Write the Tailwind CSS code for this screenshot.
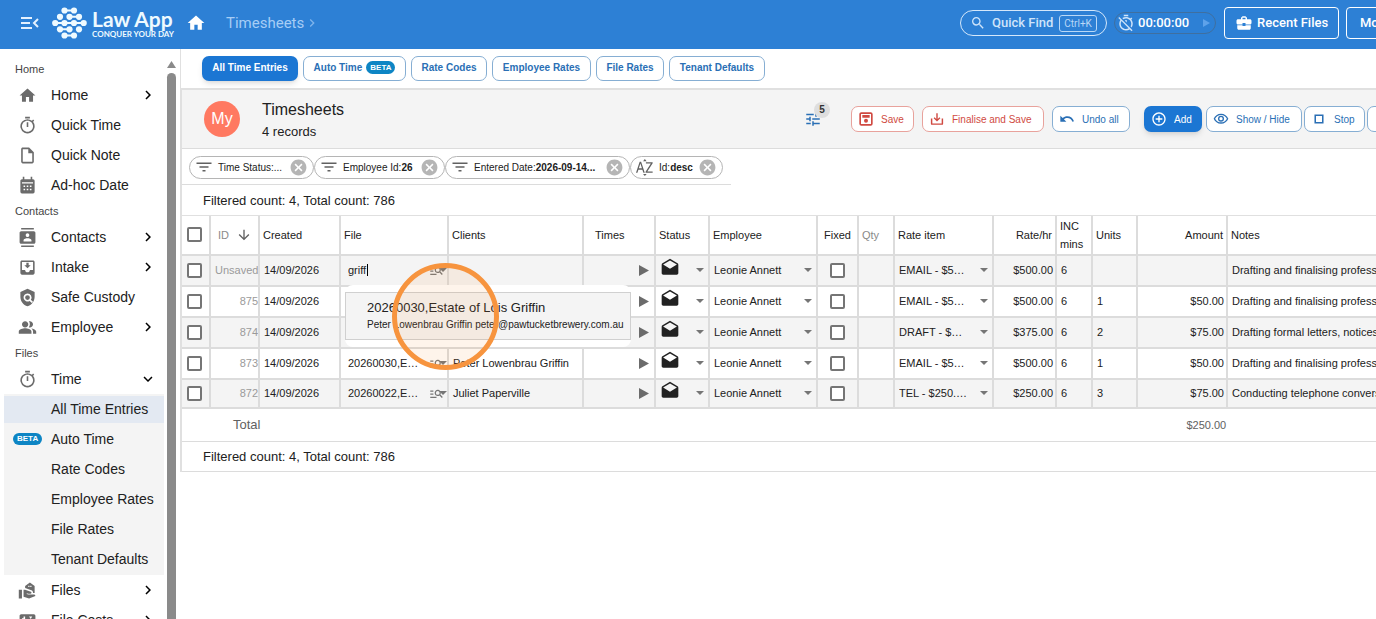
<!DOCTYPE html>
<html lang="en">
<head>
  <meta charset="UTF-8">
  <meta name="viewport" content="width=device-width, initial-scale=1.0">
  <title>Timesheets | Law App</title>
  <script src="https://cdn.jsdelivr.net/npm/@tailwindcss/browser@4"></script>
</head>
<body class="h-screen overflow-hidden flex flex-col bg-white text-[#212121] font-['Liberation_Sans',Arial,sans-serif]">

  <!-- icon sprite -->
  <svg class="hidden">
    <symbol id="i-home" viewBox="0 0 24 24"><path d="M10 20v-6h4v6h5v-8h3L12 3 2 12h3v8z"/></symbol>
    <symbol id="i-timer" viewBox="0 0 24 24"><path d="M15 1H9v2h6V1zm-4 13h2V8h-2v6zm8.03-6.61 1.42-1.42c-.43-.51-.9-.99-1.41-1.41l-1.42 1.42A8.96 8.96 0 0 0 12 4a9 9 0 1 0 7.03 3.39zM12 20c-3.87 0-7-3.13-7-7s3.13-7 7-7 7 3.13 7 7-3.13 7-7 7z"/></symbol>
    <symbol id="i-timer-off" viewBox="0 0 24 24"><path d="M19.04 4.55l-1.42 1.42C16.07 4.74 14.12 4 12 4c-1.83 0-3.53.55-4.95 1.48l1.46 1.46C9.53 6.35 10.73 6 12 6c3.87 0 7 3.13 7 7 0 1.27-.35 2.47-.94 3.49l1.45 1.45C20.45 16.53 21 14.83 21 13c0-2.12-.74-4.07-1.97-5.61l1.42-1.42-1.41-1.42zM15 1H9v2h6V1zm-4 8.44 2 2V8h-2v1.44zM3.02 4 1.75 5.27 4.5 8.03C3.55 9.45 3 11.16 3 13c0 4.97 4.02 9 9 9 1.84 0 3.55-.55 4.98-1.5l2.5 2.5 1.27-1.27L3.02 4zM12 20c-3.87 0-7-3.13-7-7 0-1.28.35-2.48.95-3.52l9.56 9.56c-1.03.61-2.23.96-3.51.96z"/></symbol>
    <symbol id="i-note" viewBox="0 0 24 24"><path d="M14 2H6c-1.1 0-2 .9-2 2v16c0 1.1.9 2 2 2h12c1.1 0 2-.9 2-2V8l-6-6zM6 20V4h7v5h5v11H6z"/></symbol>
    <symbol id="i-calendar" viewBox="0 0 24 24"><path fill-rule="evenodd" d="M5 4h1V1h2v3h8V1h2v3h1a2 2 0 0 1 2 2v14a2 2 0 0 1-2 2H5a2 2 0 0 1-2-2V6c0-1.100.9-2 2-2zM5 8v1.500h14V8zm2 4v2h2v-2zm4 0v2h2v-2zm4 0v2h2v-2zm-8 4v2h2v-2zm4 0v2h2v-2zm4 0v2h2v-2z"/></symbol>
    <symbol id="i-contacts" viewBox="0 0 24 24"><path d="M20 0H4v2h16V0zM4 24h16v-2H4v2zM20 4H4c-1.100 0-2 .9-2 2v12c0 1.100.9 2 2 2h16c1.100 0 2-.9 2-2V6c0-1.100-.9-2-2-2zm-8 2.750c1.240 0 2.250 1.010 2.250 2.250s-1.010 2.250-2.250 2.250S9.750 10.240 9.750 9 10.760 6.750 12 6.750zM17 17H7v-1.500c0-1.670 3.330-2.500 5-2.500s5 .83 5 2.500V17z"/></symbol>
    <symbol id="i-intake" viewBox="0 0 24 24"><path d="M16 9h-2.550V6h-2.900v3H8l4 4 4-4zm3-6H5c-1.100 0-2 .9-2 2v14c0 1.100.9 2 2 2h14c1.100 0 2-.9 2-2V5c0-1.100-.9-2-2-2zm0 12h-4c0 1.660-1.350 3-3 3s-3-1.340-3-3H5V5h14v10z"/></symbol>
    <symbol id="i-shield" viewBox="0 0 24 24"><path fill-rule="evenodd" d="M12 1l9 4v6c0 5.500-3.800 10.700-9 12-5.200-1.300-9-6.500-9-12V5zm0 6a5 5 0 1 0 2.600 9.270L17.500 19.100l1.400-1.700-2.700-2.600A5 5 0 0 0 12 7zm0 2a3 3 0 1 1 0 6 3 3 0 0 1 0-6z"/></symbol>
    <symbol id="i-people" viewBox="0 0 24 24"><path d="M16.670 13.130C18.040 14.060 19 15.320 19 17v3h4v-3c0-2.180-3.570-3.470-6.330-3.870zM15 12c2.210 0 4-1.790 4-4s-1.790-4-4-4c-.47 0-.91.1-1.330.24C14.500 5.270 15 6.580 15 8s-.5 2.730-1.330 3.760c.42.14.86.24 1.330.24zM9 12c2.210 0 4-1.790 4-4s-1.790-4-4-4-4 1.790-4 4 1.790 4 4 4zm0 1c-2.670 0-8 1.340-8 4v3h16v-3c0-2.660-5.330-4-8-4z"/></symbol>
    <symbol id="i-files" viewBox="0 0 24 24"><path d="M1 11h4v11H1zM20 17h-7l-2.090-.73.330-.940L13 16h2.820c.65 0 1.180-.53 1.180-1.180 0-.49-.31-.93-.77-1.110L8.970 11H7v9.020L14 22l8-3c-.01-1.100-.9-2-2-2zM21 15.300V6.200L15 2 9 6.200v2.600l7.930 2.950c1.240.46 2.070 1.660 2.070 2.980 0 .2 0 .4-.1.570zM13 6h1.500v1.500H13zm2.500 0H17v1.500h-1.500z"/></symbol>
    <symbol id="i-costs" viewBox="0 0 24 24"><path fill-rule="evenodd" d="M4 4h16a2 2 0 0 1 2 2v12a2 2 0 0 1-2 2H4a2 2 0 0 1-2-2V6c0-1.100.9-2 2-2zm3 3v2H5v2h4V7zm7 0l2 3 2-3z"/></symbol>
    <symbol id="i-right" viewBox="0 0 24 24"><path d="M8.600 16.600 13.200 12 8.600 7.400 10 6l6 6-6 6z"/></symbol>
    <symbol id="i-down" viewBox="0 0 24 24"><path d="M16.600 8.600 12 13.200 7.400 8.600 6 10l6 6 6-6z"/></symbol>
    <symbol id="i-search" viewBox="0 0 24 24"><path d="M15.500 14h-.79l-.28-.27A6.470 6.470 0 0 0 16 9.500 6.500 6.500 0 1 0 9.500 16c1.610 0 3.090-.59 4.230-1.570l.27.28v.79l5 4.990L20.490 19l-4.990-5zm-6 0C7.010 14 5 11.990 5 9.500S7.010 5 9.500 5 14 7.010 14 9.500 11.990 14 9.500 14z"/></symbol>
    <symbol id="i-case" viewBox="0 0 24 24"><path d="M10 16v-1H3v4c0 1.110.89 2 2 2h14c1.110 0 2-.89 2-2v-4h-7v1h-4zm10-9h-4V5l-2-2h-4L8 5v2H4c-1.100 0-2 .9-2 2v3c0 1.110.89 2 2 2h6v-2h4v2h6c1.100 0 2-.9 2-2V9c0-1.100-.9-2-2-2zm-6 0h-4V5h4v2z"/></symbol>
    <symbol id="i-tune" viewBox="0 0 24 24"><path d="M3 17v2h6v-2H3zM3 5v2h10V5H3zm10 16v-2h8v-2h-8v-2h-2v6h2zM7 9v2H3v2h4v2h2V9H7zm14 4v-2H11v2h10zm-6-4h2V7h4V5h-4V3h-2v6z"/></symbol>
    <symbol id="i-save" viewBox="0 0 24 24"><path fill-rule="evenodd" d="M5 2h14a3 3 0 0 1 3 3v14a3 3 0 0 1-3 3H5a3 3 0 0 1-3-3V5c0-1.700 1.300-3 3-3zm-.5 2.500v15h15v-15zm2 1.500h11v4h-11zM12 11.500a3 3 0 1 1 0 6 3 3 0 0 1 0-6z"/></symbol>
    <symbol id="i-import" viewBox="0 0 24 24"><path d="M10.800 2h2.400v10l3-3 1.600 1.600L12 16.400l-5.800-5.800L7.800 9l3 3zM1.500 11H4v8.500h16V11h2.500v9a2 2 0 0 1-2 2h-17a2 2 0 0 1-2-2z"/></symbol>
    <symbol id="i-undo" viewBox="0 0 24 24"><path d="M12.500 8c-2.650 0-5.050.99-6.900 2.600L2 7v9h9l-3.620-3.620c1.390-1.160 3.160-1.880 5.120-1.880 3.540 0 6.550 2.310 7.600 5.500l2.370-.78C21.080 11.030 17.150 8 12.500 8z"/></symbol>
    <symbol id="i-add" viewBox="0 0 24 24"><path d="M13 7h-2v4H7v2h4v4h2v-4h4v-2h-4V7zm-1-5C6.480 2 2 6.480 2 12s4.480 10 10 10 10-4.480 10-10S17.520 2 12 2zm0 18c-4.410 0-8-3.590-8-8s3.590-8 8-8 8 3.590 8 8-3.590 8-8 8z"/></symbol>
    <symbol id="i-eye" viewBox="0 0 24 24"><path d="M12 6c3.790 0 7.170 2.130 8.820 5.500C19.170 14.870 15.790 17 12 17s-7.170-2.130-8.820-5.500C4.830 8.130 8.210 6 12 6m0-2C7 4 2.730 7.110 1 11.500 2.730 15.890 7 19 12 19s9.270-3.110 11-7.500C21.270 7.110 17 4 12 4zm0 5a2.500 2.500 0 1 1 0 5 2.500 2.500 0 0 1 0-5m0-2a4.500 4.500 0 1 0 0 9 4.500 4.500 0 0 0 0-9z"/></symbol>
    <symbol id="i-stop" viewBox="0 0 24 24"><path d="M16.500 7.500v9h-9v-9h9m2.300-2.300H5.200v13.600h13.600z"/></symbol>
    <symbol id="i-filter" viewBox="0 0 24 24"><path d="M10 18h4v-2h-4v2zM2 6v2h20V6H2zm4 7h12v-2H6v2z"/></symbol>
    <symbol id="i-close" viewBox="0 0 24 24"><path d="M12 2C6.470 2 2 6.470 2 12s4.470 10 10 10 10-4.470 10-10S17.530 2 12 2zm5 13.590L15.590 17 12 13.410 8.410 17 7 15.590 10.590 12 7 8.410 8.410 7 12 10.590 15.590 7 17 8.410 13.410 12 17 15.590z"/></symbol>
    <symbol id="i-sort" viewBox="0 0 24 24"><path d="M10 3h5l-2.500-3zM10 21h5l-2.500 3zM0 19.500 5.200 4h2l5.200 15.500h-2L9 15H3.400L2 19.500zM4 13h4.400L6.200 6.200zM14 4.500h9.500v1.600L16 17.800h7.500v1.700h-10v-1.600L21 6.200h-7z"/></symbol>
    <symbol id="i-arrow-down" viewBox="0 0 24 24"><path d="m20 12-1.410-1.410L13 16.170V4h-2v12.170l-5.580-5.590L4 12l8 8 8-8z"/></symbol>
    <symbol id="i-mail" viewBox="0 0 24 24"><path d="M21.990 8c0-.72-.37-1.350-.94-1.700L12 1 2.950 6.300C2.380 6.650 2 7.280 2 8v10c0 1.100.9 2 2 2h16c1.100 0 2-.9 2-2l-.01-10zM12 13 3.740 7.840 12 3l8.260 4.840L12 13z"/></symbol>
    <symbol id="i-manage" viewBox="0 0 24 24"><path d="M7 9H2V7h5zM7 12H2v2h5zM20.600 19l-3.830-3.830A5 5 0 1 1 18.200 13.750L22 17.600zM17 11a3 3 0 1 0-6 0 3 3 0 0 0 6 0M2 19h10v-2H2z"/></symbol>
  </svg>

  <header class="h-[49px] pb-[3px] shrink-0 flex items-center overflow-hidden bg-[#2d80d5] text-white font-[Roboto,sans-serif]">
    <button class="ml-5 mr-3 w-5" aria-label="Collapse menu">
      <svg class="size-5" viewBox="0 0 20 20" fill="none" stroke="#e4f1ff" stroke-width="2"><path d="M1 5h11M1 10h9M1 15h11M18 6l-4 4 4 4"/></svg>
    </button>
    <a href="#" class="flex items-center gap-[5px] text-[#eefaff]" aria-label="Law App">
      <svg class="w-[35px] h-8" viewBox="0 0 35 32" fill="currentColor" stroke="currentColor">
        <path stroke-width="2" fill="none" d="M12.500 3.500H22M17.500 9.800H27M3 16h29M8 22.300h9.500M12.500 28.500H22"/>
        <g stroke="none">
          <circle cx="12.500" cy="3.500" r="3.100"/><circle cx="22" cy="3.500" r="3.100"/>
          <circle cx="8" cy="9.800" r="3.100"/><circle cx="17.500" cy="9.800" r="3.100"/><circle cx="27" cy="9.800" r="3.100"/>
          <circle cx="3.200" cy="16" r="3.100"/><circle cx="12.500" cy="16" r="3.100"/><circle cx="22" cy="16" r="3.100"/><circle cx="31.700" cy="16" r="3.100"/>
          <circle cx="8" cy="22.300" r="3.100"/><circle cx="17.500" cy="22.300" r="3.100"/><circle cx="27" cy="22.300" r="3.100"/>
          <circle cx="12.500" cy="28.500" r="3.100"/><circle cx="22" cy="28.500" r="3.100"/>
        </g>
      </svg>
      <span class="flex flex-col whitespace-nowrap w-[82px] font-[Lato,sans-serif] font-bold">
        <span class="text-[21px] leading-[22px]">Law App</span>
        <span class="text-[8px] leading-[8px]">CONQUER YOUR DAY</span>
      </span>
    </a>
    <a href="#" class="ml-3" aria-label="Home"><svg class="size-5 fill-white"><use href="#i-home"/></svg></a>
    <a href="#" class="ml-5 text-[15px] text-[#a6cdf5]">Timesheets</a>
    <svg class="size-4 fill-[#7fb4ec]"><use href="#i-right"/></svg>

    <div class="ml-auto -mr-8 flex items-center shrink-0">
      <button class="h-[26px] w-[147px] shrink-0 flex items-center rounded-full border border-[#d5e8fb] pl-[9px] text-[13px] font-medium text-[#cfe4fa]">
        <svg class="size-4 mr-[6px] fill-current"><use href="#i-search"/></svg>Quick Find
        <kbd class="ml-[6px] h-[17px] px-1 rounded-[3px] border border-[#b9d8f7] text-[10px] leading-[15px] font-[Roboto,sans-serif] font-normal text-[#b9d8f7]">Ctrl+K</kbd>
      </button>
      <button class="ml-[7px] h-[22px] w-[102px] shrink-0 flex items-center rounded-full border border-[#3f6f9f] pl-0.5 text-[13px] font-medium">
        <svg class="size-[18px] mr-[3px] fill-[#cfe4fa]"><use href="#i-timer-off"/></svg>00:00:00
        <svg class="ml-auto mr-[5px] size-2 fill-[#5ea2ea]" viewBox="0 0 8 8"><path d="M1 0l7 4-7 4z"/></svg>
      </button>
      <button class="ml-2 h-8 w-[115px] shrink-0 flex items-center rounded border border-white pl-[10px] text-[13px] font-medium">
        <svg class="size-[18px] mr-1 fill-white"><use href="#i-case"/></svg>Recent Files
      </button>
      <button class="ml-[7px] h-8 w-[62px] shrink-0 rounded border border-white pl-[13px] text-left text-[13px] font-medium">More</button>
    </div>
  </header>

  <div class="flex flex-1 min-h-0">
    <aside class="w-[180px] shrink-0 flex overflow-hidden">
      <nav id="sidebar" class="flex-1 pl-1 pt-[9px] text-sm"></nav>
      <!-- scrollbar -->
      <div class="w-[9px] ml-[3px] mr-1 pt-3 flex flex-col items-center">
        <svg class="w-[9px] h-[7px] shrink-0 fill-[#8a8a8a]" viewBox="0 0 9 7"><path d="M4.500 0L9 7H0z"/></svg>
        <div class="mt-[5px] w-full flex-1 rounded-t-full bg-[#8a8a8a]"></div>
      </div>
    </aside>

    <main class="flex-1 min-w-0 overflow-hidden">
      <nav class="h-[39px] pl-[21px] pb-px flex items-center gap-[5px] text-[10px] font-bold text-[#2a6fb5] border-l border-[#e0e0e0] *:pb-px">
        <a href="#" class="h-[25px] w-24 flex items-center justify-center rounded-[7px] bg-[#1b76d3] text-white shadow-md">All Time Entries</a>
        <a href="#" class="h-[25px] w-[103px] flex items-center justify-center gap-1 rounded-[7px] border border-[#86aed3]">Auto Time <span class="rounded-full bg-[#0d85c4] px-1 h-[13px] leading-[13px] text-[8px] text-white">BETA</span></a>
        <a href="#" class="h-[25px] w-[76px] flex items-center justify-center rounded-[7px] border border-[#86aed3]">Rate Codes</a>
        <a href="#" class="h-[25px] w-[99px] flex items-center justify-center rounded-[7px] border border-[#86aed3]">Employee Rates</a>
        <a href="#" class="h-[25px] w-[68px] flex items-center justify-center rounded-[7px] border border-[#86aed3]">File Rates</a>
        <a href="#" class="h-[25px] w-24 flex items-center justify-center rounded-[7px] border border-[#86aed3]">Tenant Defaults</a>
      </nav>

      <section class="border-l-2 border-t-2 border-[#e0e0e0]">
        <div class="h-[59px] flex items-center bg-[#f4f4f4] border-b border-[#dcdcdc] overflow-hidden">
          <div class="ml-[22px] size-9 shrink-0 rounded-full bg-[#ff7961] text-white flex items-center justify-center">My</div>
          <div class="ml-[22px] pt-1 flex-1 whitespace-nowrap">
            <h1 class="text-base leading-[22px]">Timesheets</h1>
            <p class="text-[13px] leading-[22px]">4 records</p>
          </div>
          <div class="flex items-center shrink-0 -mr-8 text-[10px]">
            <button class="relative mr-[29px] size-[18px]" aria-label="Filters">
              <svg class="size-[18px] fill-[#2a6fb5]"><use href="#i-tune"/></svg>
              <span class="absolute left-[10px] -top-2 size-4 rounded-full bg-[#dedede] text-[10px] leading-4 font-bold text-[#333]">5</span>
            </button>
            <button class="mr-2 h-[26px] w-[63px] flex items-center rounded-[7px] border border-[#e8a29c] bg-white pl-[6px] text-[#d04a42]"><svg class="size-4 mr-[7px] fill-current"><use href="#i-save"/></svg>Save</button>
            <button class="mr-2 h-[26px] w-[122px] flex items-center rounded-[7px] border border-[#e8a29c] bg-white pl-[7px] text-[#d04a42]"><svg class="size-[14px] mr-2 fill-current"><use href="#i-import"/></svg>Finalise and Save</button>
            <button class="mr-[14px] h-[26px] w-[78px] flex items-center rounded-[7px] border border-[#86aed3] bg-white pl-[6px] text-[#2a6fb5]"><svg class="size-4 mr-[7px] fill-current"><use href="#i-undo"/></svg>Undo all</button>
            <button class="mr-1 h-[26px] w-[58px] flex items-center rounded-[7px] bg-[#1b76d3] pl-[7px] text-white shadow-md"><svg class="size-4 mr-[7px] fill-current"><use href="#i-add"/></svg>Add</button>
            <button class="mr-0.5 h-[26px] w-24 flex items-center rounded-[7px] border border-[#86aed3] bg-white pl-[6px] text-[#2a6fb5]"><svg class="size-4 mr-[7px] fill-current"><use href="#i-eye"/></svg>Show / Hide</button>
            <button class="mr-0.5 h-[26px] w-[61px] flex items-center rounded-[7px] border border-[#86aed3] bg-white pl-[6px] text-[#2a6fb5]"><svg class="size-4 mr-[7px] fill-current"><use href="#i-stop"/></svg>Stop</button>
            <button class="h-[26px] w-[41px] rounded-[7px] border border-[#86aed3] bg-white" aria-label="More actions"></button>
          </div>
        </div>

        <div class="h-[36px] pl-[7px] pt-px flex items-center text-[10px] w-[549px] border-b border-[#dcdcdc] whitespace-nowrap">
          <div class="h-[23px] w-[125px] flex items-center rounded-full border border-[#b5b5b5] px-[5px]"><svg class="size-[18px] mr-[5px] fill-[#616161]"><use href="#i-filter"/></svg>Time Status:...<button class="ml-auto" aria-label="Remove"><svg class="size-[19px] fill-[#b5b5b5]"><use href="#i-close"/></svg></button></div>
          <div class="h-[23px] w-[131px] flex items-center rounded-full border border-[#b5b5b5] px-[5px]"><svg class="size-[18px] mr-[5px] fill-[#616161]"><use href="#i-filter"/></svg>Employee Id:<b>26</b><button class="ml-auto" aria-label="Remove"><svg class="size-[19px] fill-[#b5b5b5]"><use href="#i-close"/></svg></button></div>
          <div class="h-[23px] w-[185px] flex items-center rounded-full border border-[#b5b5b5] px-[5px]"><svg class="size-[18px] mr-[5px] fill-[#616161]"><use href="#i-filter"/></svg>Entered Date:<b>2026-09-14...</b><button class="ml-auto" aria-label="Remove"><svg class="size-[19px] fill-[#b5b5b5]"><use href="#i-close"/></svg></button></div>
          <div class="h-[23px] w-[93px] flex items-center rounded-full border border-[#b5b5b5] px-[5px]"><svg class="size-[17px] mr-[6px] fill-[#616161]"><use href="#i-sort"/></svg>Id:<b>desc</b><button class="ml-auto" aria-label="Remove"><svg class="size-[19px] fill-[#b5b5b5]"><use href="#i-close"/></svg></button></div>
        </div>

        <p class="h-[30px] pl-[21px] text-[13px] leading-8">Filtered count: 4, Total count: 786</p>

        <table class="w-full table-fixed border-separate border-spacing-0 text-[11px] leading-[18px] border-t border-[#e0e0e0]">
          <colgroup>
            <col class="w-[29px]"><col class="w-[49px]"><col class="w-[81px]"><col class="w-[108px]"><col class="w-[135px]"><col class="w-[72px]"><col class="w-[54px]"><col class="w-[108px]"><col class="w-[41px]"><col class="w-[36px]"><col class="w-[99px]"><col class="w-[63px]"><col class="w-[36px]"><col class="w-[45px]"><col class="w-[90px]"><col>
          </colgroup>
          <thead>
            <tr class="h-10 text-left *:border-r-2 *:last:border-r-0 *:border-b-2 *:border-[#dcdcdc] *:font-normal *:p-0 *:pb-px *:pl-[3px]">
              <th class="pl-[5px]!"><input type="checkbox" aria-label="Select all" class="block appearance-none size-[15px] rounded-[2px] border-2 border-[#757575] bg-white"></th>
              <th class="text-[#8a8a8a]"><span class="flex items-center pl-1">ID<svg class="ml-[7px] size-4 fill-[#616161]"><use href="#i-arrow-down"/></svg></span></th>
              <th>Created</th>
              <th>File</th>
              <th>Clients</th>
              <th class="pl-[11px]!">Times</th>
              <th>Status</th>
              <th>Employee</th>
              <th class="pl-[6px]!">Fixed</th>
              <th class="text-[#8a8a8a]">Qty</th>
              <th>Rate item</th>
              <th class="text-right pr-[3px]!">Rate/hr</th>
              <th>INC mins</th>
              <th>Units</th>
              <th class="text-right pr-[3px]!">Amount</th>
              <th>Notes</th>
            </tr>
          </thead>
          <tbody id="entries"></tbody>
        </table>

        <div class="h-[33px] flex items-center border-b border-[#dcdcdc] text-[#616161]">
          <span class="pl-[51px] text-[13px]">Total</span>
          <span class="ml-[926px] text-[11px]">$250.00</span>
        </div>
        <p class="h-[30px] pl-[21px] text-[13px] leading-[29px] border-b border-[#dcdcdc]">Filtered count: 4, Total count: 786</p>
      </section>
    </main>
  </div>

  <script>
    const menu = [
      { heading: 'Home' },
      { label: 'Home', icon: 'home', arrow: 'right' },
      { label: 'Quick Time', icon: 'timer' },
      { label: 'Quick Note', icon: 'note' },
      { label: 'Ad-hoc Date', icon: 'calendar' },
      { heading: 'Contacts' },
      { label: 'Contacts', icon: 'contacts', arrow: 'right' },
      { label: 'Intake', icon: 'intake', arrow: 'right' },
      { label: 'Safe Custody', icon: 'shield' },
      { label: 'Employee', icon: 'people', arrow: 'right' },
      { heading: 'Files' },
      { label: 'Time', icon: 'timer', arrow: 'down', children: ['All Time Entries', 'Auto Time', 'Rate Codes', 'Employee Rates', 'File Rates', 'Tenant Defaults'] },
      { label: 'Files', icon: 'files', arrow: 'right' },
      { label: 'File Costs', icon: 'costs', arrow: 'right' },
    ];

    const subItem = (label) => `
      <a href="#" class="flex items-center h-[30px]">
        <span class="flex items-center w-full h-[27px] ${label === 'All Time Entries' ? 'bg-[#e3e9f2]' : ''}">
          <span class="w-[47px] pl-[9px] flex">${label === 'Auto Time' ? '<span class="rounded-full bg-[#0d85c4] px-1 h-[12px] leading-[12px] text-[8px] font-bold text-white">BETA</span>' : ''}</span>
          <span>${label}</span>
        </span>
      </a>`;

    document.getElementById('sidebar').innerHTML = menu.map((m) => {
      if (m.heading) return `<h2 class="h-[22px] pl-[11px] text-[11px] leading-[22px] text-[#444]">${m.heading}</h2>`;
      return `
        <a href="#" class="flex items-center h-[30px] pl-[14px] pr-[7px]">
          <svg class="size-[19px] shrink-0 mr-[14px] fill-[#6b6b6b]"><use href="#i-${m.icon}"/></svg>
          <span>${m.label}</span>
          ${m.arrow ? `<svg class="ml-auto size-[18px]"><use href="#i-${m.arrow}"/></svg>` : ''}
        </a>
        ${m.children ? `<div class="pb-px bg-[#f4f4f4]">${m.children.map(subItem).join('')}</div>` : ''}`;
    }).join('');

    const rows = [
      { id: 'Unsaved', file: null, client: '', item: 'EMAIL - $5…', rate: '$500.00', units: '', amount: '', notes: 'Drafting and finalising professional letter' },
      { id: '875', file: '', client: '', item: 'EMAIL - $5…', rate: '$500.00', units: '1', amount: '$50.00', notes: 'Drafting and finalising professional letter' },
      { id: '874', file: '', client: '', item: 'DRAFT - $…', rate: '$375.00', units: '2', amount: '$75.00', notes: 'Drafting formal letters, notices and forms' },
      { id: '873', file: '20260030,E…', client: 'Peter Lowenbrau Griffin', item: 'EMAIL - $5…', rate: '$500.00', units: '1', amount: '$50.00', notes: 'Drafting and finalising professional letter' },
      { id: '872', file: '20260022,E…', client: 'Juliet Paperville', item: 'TEL - $250.…', rate: '$250.00', units: '3', amount: '$75.00', notes: 'Conducting telephone conversation' },
    ];

    const caret = '<svg class="shrink-0 w-2 h-1 fill-[#757575]" viewBox="0 0 8 4"><path d="M0 0h8L4 4z"/></svg>';
    const lookup = `<span class="ml-auto flex items-center"><svg class="size-[15px] fill-[#757575]"><use href="#i-manage"/></svg><svg class="-ml-[5px] w-2 h-1 fill-[#757575]" viewBox="0 0 8 4"><path d="M0 0h8L4 4z"/></svg></span>`;
    const check = (label) => `<input type="checkbox" aria-label="${label}" class="block appearance-none size-[15px] rounded-[2px] border-2 border-[#757575] bg-white">`;
    const select = (label, value) => `
      <span class="flex items-center pr-1">
        <select aria-label="${label}" class="appearance-none flex-1 min-w-0 outline-none"><option>${value}</option></select>${caret}
      </span>`;

    // suggestion list under the file box, with the click marker over it
    const suggestions = `
      <div class="absolute z-10 left-[4px] top-[29px] w-[286px] h-[62px] py-[7px] rounded-lg bg-white">
        <button class="block w-full h-12 pl-[21px] text-left border border-[#d0d0d0] bg-[#f4f4f4] whitespace-nowrap">
          <span class="block text-[13px] leading-[18px]">20260030,Estate of Lois Griffin</span>
          <span class="block text-[10px] leading-4">Peter Lowenbrau Griffin peter@pawtucketbrewery.com.au</span>
        </button>
        <span class="absolute left-[47px] -top-[22px] size-[107px] rounded-full border-5 border-[#f7943e] bg-[#f7943e]/10 pointer-events-none"></span>
      </div>`;

    const fileBox = `
      <input type="text" value="griff" aria-label="File" class="w-[19px] outline-none">
      <span class="w-px h-3 bg-black"></span>`;

    document.getElementById('entries').innerHTML = rows.map((r, i) => `
      <tr class="${i === 4 ? 'h-[29px]' : 'h-[31px]'} ${i % 2 ? 'bg-white' : 'bg-[#f4f4f4]'} *:border-r-2 *:last:border-r-0 *:border-b-2 *:border-[#dcdcdc] *:p-0 *:pb-px *:pl-[4px] *:whitespace-nowrap">
        <td class="pl-[5px]!">${check('Select ' + r.id)}</td>
        <td class="text-[#9a9a9a] text-right overflow-hidden">${r.id}</td>
        <td>14/09/2026</td>
        <td class="relative pl-[7px]!">
          <span class="flex items-center">
            ${r.file === null ? fileBox : `<span>${r.file}</span>`}
            ${lookup}
          </span>
          ${r.file === null ? suggestions : ''}
        </td>
        <td>${r.client}</td>
        <td><button class="block ml-auto mr-[5px]" aria-label="Start timer"><svg class="w-[10px] h-[11px] fill-[#6b6b6b]" viewBox="0 0 10 11"><path d="M0 0l10 5.500L0 11z"/></svg></button></td>
        <td><span class="flex items-center pr-1"><svg class="size-5 mb-1 fill-[#212121]"><use href="#i-mail"/></svg><span class="flex-1"></span>${caret}</span></td>
        <td>${select('Employee', 'Leonie Annett')}</td>
        <td class="pl-[12px]!">${check('Fixed')}</td>
        <td></td>
        <td>${select('Rate item', r.item)}</td>
        <td class="text-right pr-[2px]!">${r.rate}</td>
        <td>6</td>
        <td>${r.units}</td>
        <td class="text-right pr-[2px]!">${r.amount}</td>
        <td class="overflow-hidden">${r.notes}</td>
      </tr>`).join('');
  </script>
</body>
</html>
